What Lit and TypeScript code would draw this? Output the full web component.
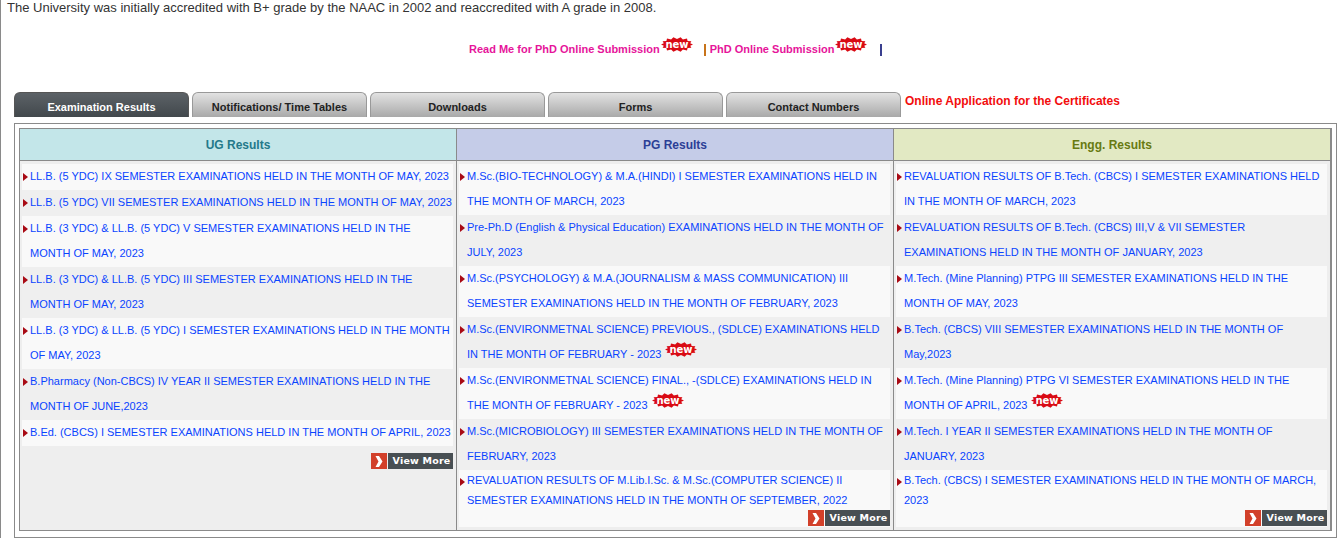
import { LitElement, html, css, svg } from "lit";
import { customElement } from "lit/decorators.js";

type Item = { t: string; tail?: string };
const ug: Item[] = [
  { t: "LL.B. (5 YDC) IX SEMESTER EXAMINATIONS HELD IN THE MONTH OF MAY, 2023" },
  { t: "LL.B. (5 YDC) VII SEMESTER EXAMINATIONS HELD IN THE MONTH OF MAY, 2023" },
  { t: "LL.B. (3 YDC) & LL.B. (5 YDC) V SEMESTER EXAMINATIONS HELD IN THE MONTH OF MAY, 2023" },
  { t: "LL.B. (3 YDC) & LL.B. (5 YDC) III SEMESTER EXAMINATIONS HELD IN THE MONTH OF MAY, 2023" },
  { t: "LL.B. (3 YDC) & LL.B. (5 YDC) I SEMESTER EXAMINATIONS HELD IN THE MONTH OF MAY, 2023" },
  { t: "B.Pharmacy (Non-CBCS) IV YEAR II SEMESTER EXAMINATIONS HELD IN THE MONTH OF JUNE,2023" },
  { t: "B.Ed. (CBCS) I SEMESTER EXAMINATIONS HELD IN THE MONTH OF APRIL, 2023" },
];
const pg: Item[] = [
  { t: "M.Sc.(BIO-TECHNOLOGY) & M.A.(HINDI) I SEMESTER EXAMINATIONS HELD IN THE MONTH OF MARCH, 2023" },
  { t: "Pre-Ph.D (English & Physical Education) EXAMINATIONS HELD IN THE MONTH OF JULY, 2023" },
  { t: "M.Sc.(PSYCHOLOGY) & M.A.(JOURNALISM & MASS COMMUNICATION) III SEMESTER EXAMINATIONS HELD IN THE MONTH OF FEBRUARY, 2023" },
  { t: "M.Sc.(ENVIRONMETNAL SCIENCE) PREVIOUS., (SDLCE) EXAMINATIONS HELD", tail: "IN THE MONTH OF FEBRUARY - 2023" },
  { t: "M.Sc.(ENVIRONMETNAL SCIENCE) FINAL., -(SDLCE) EXAMINATIONS HELD IN", tail: "THE MONTH OF FEBRUARY - 2023" },
  { t: "M.Sc.(MICROBIOLOGY) III SEMESTER EXAMINATIONS HELD IN THE MONTH OF FEBRUARY, 2023" },
  { t: "REVALUATION RESULTS OF M.Lib.I.Sc. & M.Sc.(COMPUTER SCIENCE) II SEMESTER EXAMINATIONS HELD IN THE MONTH OF SEPTEMBER, 2022" },
];
const eg: Item[] = [
  { t: "REVALUATION RESULTS OF B.Tech. (CBCS) I SEMESTER EXAMINATIONS HELD IN THE MONTH OF MARCH, 2023" },
  { t: "REVALUATION RESULTS OF B.Tech. (CBCS) III,V & VII SEMESTER EXAMINATIONS HELD IN THE MONTH OF JANUARY, 2023" },
  { t: "M.Tech. (Mine Planning) PTPG III SEMESTER EXAMINATIONS HELD IN THE MONTH OF MAY, 2023" },
  { t: "B.Tech. (CBCS) VIII SEMESTER EXAMINATIONS HELD IN THE MONTH OF May,2023" },
  { t: "M.Tech. (Mine Planning) PTPG VI SEMESTER EXAMINATIONS HELD IN THE", tail: "MONTH OF APRIL, 2023" },
  { t: "M.Tech. I YEAR II SEMESTER EXAMINATIONS HELD IN THE MONTH OF JANUARY, 2023" },
  { t: "B.Tech. (CBCS) I SEMESTER EXAMINATIONS HELD IN THE MONTH OF MARCH, 2023" },
];

const burst = (() => {
  const pts: string[] = [];
  const n = 14;
  for (let i = 0; i < n * 2; i++) {
    const a = (Math.PI * i) / n;
    const outer = i % 2 === 0;
    const rx = outer ? 16 : 13.5;
    const ry = outer ? 7.5 : 5.5;
    pts.push(`${(16 + rx * Math.cos(a)).toFixed(1)},${(7.5 + ry * Math.sin(a)).toFixed(1)}`);
  }
  return pts.join(" ");
})();

const newIcon = html`<svg class="new" width="32" height="15" viewBox="0 0 32 15" aria-label="new">
  ${svg`<polygon points=${burst} fill="#d90a14"></polygon>
  <text x="16" y="10.500" text-anchor="middle" class="newt">new</text>`}
</svg>`;

const viewMore = html`<div class="vm-row"><span class="vm">
  <span class="vm-a"><svg width="8" height="11" viewBox="0 0 8 11"><path d="M0.500 0H4L7.500 5.500 4 11H0.500L3.500 5.500z" fill="#fff"></path></svg></span>
  <span class="vm-t">View More</span>
</span></div>`;

@customElement("app-root")
export class AppRoot extends LitElement {
  static styles = css`
    :host { display: block; font-family: "Liberation Sans", Arial, sans-serif; }
    .page { height: 538px; overflow: hidden; border-left: 1px solid #8a8a8a; box-sizing: border-box; background: #fff; }
    .intro { margin: 0; padding: 0 0 0 6px; font-size: 13px; line-height: 15px; color: #333; }
    .links { display: flex; align-items: flex-start; height: 77px; padding: 22px 0 0 468px; box-sizing: border-box; font-size: 11px; font-weight: bold; color: #e6149a; }
    .links .lnk { line-height: 13px; padding-top: 6px; }
    .links .new { margin-left: 1px; }
    .new { display: block; flex: none; }
    .newt { font: bold 10px "DejaVu Sans", sans-serif; fill: #fff; }
    .sep { width: 2px; height: 12px; margin-top: 7px; flex: none; }
    .sep-a { background: #c8741a; margin-left: 11px; margin-right: 4px; }
    .sep-b { background: #3a3f8f; margin-left: 13px; }
    .tabs { display: flex; gap: 3px; padding-left: 13px; height: 31px; align-items: flex-start; }
    .tab { width: 175px; height: 25px; box-sizing: border-box; border: 1px solid #999; border-bottom: 0; border-radius: 6px 6px 0 0; background: linear-gradient(#e2e2e2, #a9a9a9); color: #222; font-size: 11px; font-weight: bold; text-align: center; padding-top: 8px; line-height: 13px; }
    .tab.on { background: linear-gradient(#5c6267, #42484c); border-color: #555; color: #fff; }
    .cert { color: #f20d0d; font-size: 12px; font-weight: bold; line-height: 14px; padding: 2px 0 0 1px; }
    .box { margin-left: 13px; width: 1323px; height: 415px; box-sizing: border-box; border: 1px solid #8a8a8a; padding: 4px 4px 6px; }
    .grid { display: grid; grid-template-columns: repeat(3, 1fr); height: 100%; box-sizing: border-box; border: 1px solid #8a8a8a; }
    .col { border-right: 1px solid #8a8a8a; background: #eee; display: flex; flex-direction: column; min-width: 0; }
    .hd { height: 31px; flex: none; border-bottom: 1px solid #8a8a8a; font-size: 12px; font-weight: bold; text-align: center; line-height: 33px; }
    .ug .hd { background: #c3e6e9; color: #24798a; }
    .pg .hd { background: #c5cce8; color: #2c3f96; }
    .eg .hd { background: #e2e9c3; color: #687a12; }
    .list { padding: 3px 3px 3px 2px; display: flex; flex-direction: column; flex: 1; min-height: 0; }
    .row { position: relative; padding: 0 0 1px 8px; font-size: 11px; line-height: 25px; color: #0a44ff; background: #f9f9f9; }
    .row:nth-child(even) { background: #efefef; }
    .row.tall { line-height: 20px; padding-top: 0; flex: 1; }
    .mk { position: absolute; left: 1px; top: 9px; width: 0; height: 0; border-left: 5px solid #a80a14; border-top: 4px solid transparent; border-bottom: 4px solid transparent; }
    .tall .mk { top: 8px; }
    .row .new { display: inline-block; vertical-align: 1px; margin: 0 0 0 4px; }
    .vm-row { display: flex; justify-content: flex-end; padding-top: 7px; }
    .tall .vm-row { position: absolute; right: 0; bottom: 1px; }
    .vm { display: flex; gap: 1px; height: 16px; }
    .vm-a { width: 16px; background: #d2402a; display: flex; align-items: center; justify-content: center; }
    .vm-t { width: 65px; box-sizing: border-box; padding-left: 2px; background: #484f53; color: #fff; font: bold 9.500px/16px "DejaVu Sans", sans-serif; letter-spacing: 0.200px; text-align: center; }
  `;

  private renderCol(cls: string, title: string, items: Item[]) {
    const inside = cls !== "ug";
    return html`<div class="col ${cls}">
      <div class="hd">${title}</div>
      <div class="list">
        ${items.map((it, i) => {
          const tall = inside && i === items.length - 1;
          return html`<div class="row ${tall ? "tall" : ""}"><span class="mk"></span><span>${it.t}</span>${it.tail ? html` <span>${it.tail}</span>${newIcon}` : ""}${tall ? viewMore : ""}</div>`;
        })}
        ${inside ? "" : viewMore}
      </div>
    </div>`;
  }

  render() {
    return html`<div class="page">
      <p class="intro">The University was initially accredited with B+ grade by the NAAC in 2002 and reaccredited with A grade in 2008.</p>
      <div class="links">
        <span class="lnk">Read Me for PhD Online Submission</span>${newIcon}
        <span class="sep sep-a"></span>
        <span class="lnk">PhD Online Submission</span>${newIcon}
        <span class="sep sep-b"></span>
      </div>
      <div class="tabs">
        <div class="tab on">Examination Results</div>
        <div class="tab">Notifications/ Time Tables</div>
        <div class="tab">Downloads</div>
        <div class="tab">Forms</div>
        <div class="tab">Contact Numbers</div>
        <div class="cert">Online Application for the Certificates</div>
      </div>
      <div class="box"><div class="grid">
        ${this.renderCol("ug", "UG Results", ug)}
        ${this.renderCol("pg", "PG Results", pg)}
        ${this.renderCol("eg", "Engg. Results", eg)}
      </div></div>
    </div>`;
  }
}
